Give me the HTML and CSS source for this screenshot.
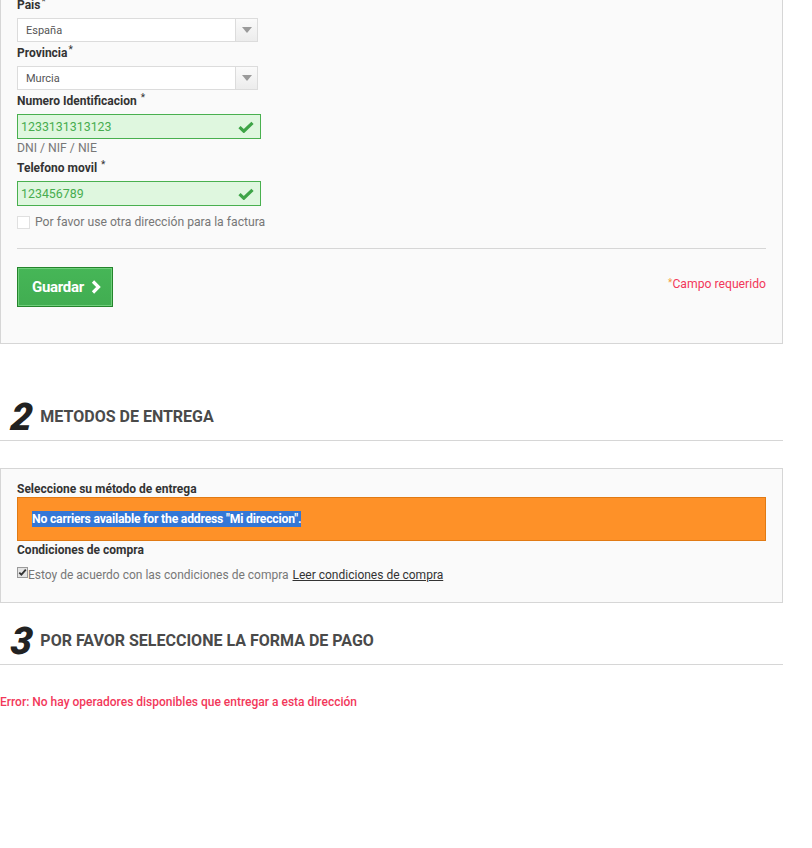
FILE: index.html
```html
<!DOCTYPE html>
<html lang="es">
<head>
    <meta charset="UTF-8">
    <meta name="viewport" content="width=device-width, initial-scale=1.0">
    <title>Pedido</title>
    <link rel="stylesheet" href="styles.css">
</head>
<body>
    <div class="checkout">
        <!-- Direccion -->
        <div class="box box-address">
            <div class="form-group">
                <label>Pais<sup>*</sup></label>
                <div class="select">
                    <span class="select-value">España</span>
                    <span class="select-arrow"></span>
                </div>
            </div>
            <div class="form-group">
                <label>Provincia<sup>*</sup></label>
                <div class="select">
                    <span class="select-value">Murcia</span>
                    <span class="select-arrow"></span>
                </div>
            </div>
            <div class="form-group">
                <label>Numero Identificacion <sup>*</sup></label>
                <div class="input ok">
                    <span>1233131313123</span>
                    <svg class="check" width="16" height="12" viewBox="0 0 16 12"><path d="M1.5 6.2 L5.8 10.2 L14.5 1.8" fill="none" stroke="#3ea447" stroke-width="3.2"/></svg>
                </div>
                <div class="hint">DNI / NIF / NIE</div>
            </div>
            <div class="form-group">
                <label>Telefono movil <sup>*</sup></label>
                <div class="input ok">
                    <span>123456789</span>
                    <svg class="check" width="16" height="12" viewBox="0 0 16 12"><path d="M1.5 6.2 L5.8 10.2 L14.5 1.8" fill="none" stroke="#3ea447" stroke-width="3.2"/></svg>
                </div>
            </div>
            <div class="checkbox-row">
                <span class="checkbox"></span>
                <span>Por favor use otra dirección para la factura</span>
            </div>
            <div class="box-footer">
                <button class="btn-save">Guardar
                    <svg width="10" height="14" viewBox="0 0 10 14"><path d="M2 1.5 L7.5 7 L2 12.5" fill="none" stroke="#fff" stroke-width="3.2"/></svg>
                </button>
                <span class="required"><sup>*</sup>Campo requerido</span>
            </div>
        </div>

        <!-- Entrega -->
        <h3 class="step"><span class="step-num">2</span>METODOS DE ENTREGA</h3>
        <div class="box box-delivery">
            <p class="box-label">Seleccione su método de entrega</p>
            <div class="warning"><span class="selected">No carriers available for the address "Mi direccion".</span></div>
            <p class="box-label">Condiciones de compra</p>
            <div class="terms">
                <svg class="checked" width="11" height="11" viewBox="0 0 11 11"><rect x="0.5" y="0.5" width="10" height="10" fill="#e4e4e4" stroke="#9a9a9a"/><path d="M2.3 5.6 L4.4 7.7 L8.8 2.6" fill="none" stroke="#333" stroke-width="1.8"/></svg>
                <span>Estoy de acuerdo con las condiciones de compra</span>
                <a href="#">Leer condiciones de compra</a>
            </div>
        </div>

        <!-- Pago -->
        <h3 class="step step-pay"><span class="step-num">3</span>POR FAVOR SELECCIONE LA FORMA DE PAGO</h3>
        <p class="error">Error: No hay operadores disponibles que entregar a esta dirección</p>
    </div>
</body>
</html>
```

FILE: styles.css
```css
* {
    margin: 0;
    padding: 0;
    box-sizing: border-box;
}
body {
    font-family: Roboto, "Liberation Sans", sans-serif;
    font-size: 12.2px;
    color: #333;
    background: #fff;
}
.checkout {
    width: 783px;
}
.box {
    background: #fafafa;
    border: 1px solid #d6d6d6;
    padding: 0 16px;
}
.box-address {
    margin-top: -23px;
    padding-top: 19px;
    border-top: none;
    height: 367px;
}
.form-group {
    margin-bottom: 2px;
}
label {
    display: block;
    line-height: 18px;
    font-size: 12px;
    font-weight: 700;
    margin-bottom: 4px;
}
sup {
    font-size: 10px;
    vertical-align: top;
    line-height: 12px;
    margin-left: 1px;
    font-weight: 400;
}
.select {
    width: 241px;
    height: 24px;
    background: #fff;
    border: 1px solid #dcdcdc;
    display: flex;
    align-items: center;
    justify-content: space-between;
    font-size: 11px;
    color: #555;
}
.select-value {
    padding-left: 8px;
}
.select-arrow {
    width: 22px;
    height: 22px;
    border-left: 1px solid #dcdcdc;
    background: linear-gradient(#fafafa, #ececec);
    display: flex;
    align-items: center;
    justify-content: center;
}
.select-arrow::after {
    content: "";
    border-left: 5px solid transparent;
    border-right: 5px solid transparent;
    border-top: 6px solid #9a9a9a;
}
.input {
    width: 244px;
    height: 25px;
    border: 1px solid #49b04f;
    background: #dff7df;
    color: #47ad4f;
    font-size: 12.4px;
    display: flex;
    align-items: center;
    justify-content: space-between;
    padding: 0 6px 0 3px;
}
.check {
    display: block;
}
.hint {
    color: #777;
    line-height: 18px;
    margin-bottom: 1px;
}
.checkbox-row {
    display: flex;
    align-items: center;
    gap: 5px;
    color: #777;
    line-height: 18px;
    margin-top: 7px;
}
.checkbox {
    width: 13px;
    height: 13px;
    border: 1px solid #e0e0e0;
    background: #fff;
}
.box-footer {
    margin-top: 17px;
    border-top: 1px solid #d6d6d6;
    padding-top: 18px;
    display: flex;
    justify-content: space-between;
    align-items: center;
}
.btn-save {
    display: flex;
    align-items: center;
    gap: 7px;
    width: 96px;
    height: 40px;
    padding-left: 14px;
    background: linear-gradient(#46b657, #41ad51);
    border: 1px solid #24842c;
    box-shadow: inset 0 0 0 1px #6fcf7b;
    color: #fff;
    font-family: Roboto, sans-serif;
    font-size: 15px;
    font-weight: 700;
    letter-spacing: -0.3px;
}
.required {
    color: #f2385a;
    margin-bottom: 6px;
}
.required sup {
    color: #f59a3c;
    margin: 0;
}
.step {
    display: flex;
    align-items: center;
    height: 44px;
    margin-top: 53px;
    padding-left: 11px;
    padding-bottom: 4px;
    border-bottom: 1px solid #d6d6d6;
    font-size: 16px;
    font-weight: 700;
    color: #4a4a4a;
}
.step-num {
    font-size: 38px;
    font-style: italic;
    font-weight: 900;
    color: #222;
    line-height: 40px;
    margin-right: 8px;
    transform: skewX(-6deg);
}
.box-delivery {
    margin-top: 27px;
    padding-top: 12px;
    padding-bottom: 19px;
}
.box-label {
    font-size: 12px;
    font-weight: 700;
    line-height: 16px;
}
.warning {
    background: #fe9128;
    border: 1px solid #e17a14;
    height: 44px;
    padding-left: 14px;
    display: flex;
    align-items: center;
    margin-bottom: 1px;
}
.selected {
    background: #3477d6;
    color: #fff;
    font-weight: 700;
    font-size: 12.2px;
    line-height: 16px;
    letter-spacing: -0.2px;
}
.terms {
    display: flex;
    align-items: center;
    color: #777;
    font-size: 12px;
    line-height: 16px;
    margin-top: 9px;
}
.checked {
    margin-top: -5px;
}
.terms a {
    color: #333;
    margin-left: 4px;
}
.step-pay {
    margin-top: 18px;
}
.error {
    color: #f2385a;
    font-weight: 500;
    font-size: 12px;
    line-height: 18px;
    margin-top: 28px;
}
```
